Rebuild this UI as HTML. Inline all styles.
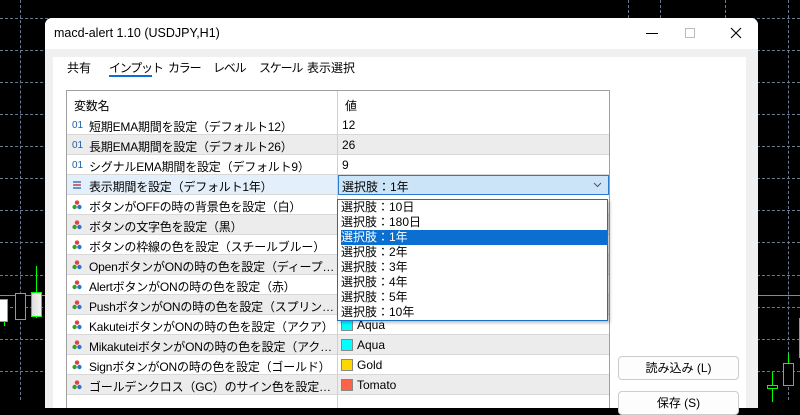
<!DOCTYPE html>
<html><head><meta charset="utf-8"><style>
*{margin:0;padding:0;box-sizing:border-box}
body{width:800px;height:400px;overflow:hidden;background:#000;position:relative;font-family:"Liberation Sans","Noto Sans CJK JP",sans-serif;font-size:12px;color:#000}
.a{position:absolute}
.hd{border-top:1px dashed #6a7a90;height:0;width:800px;left:0}
.vd{border-left:1px dashed #6a7a90;width:0;height:400px;top:0}
.dlg{left:45px;top:18px;width:713px;height:390px;background:#f0f0f0;border-radius:7px 7px 0 0;overflow:hidden}
.title{left:0;top:0;width:713px;height:31px;background:#fff;font-size:12.5px}
.panel{left:8px;top:39px;width:693px;height:360px;background:#fff}
.tab{top:41px;font-size:12px;letter-spacing:-1.2px;white-space:nowrap}
.tbl{left:21px;top:72px;width:544px;height:330px;border:1px solid #a0a0a0;border-bottom:none;background:#fff;overflow:hidden}
.row{position:absolute;left:0;width:542px;height:20px;border-bottom:1px solid #d8d8d8}
.row.g{background:#ececec}
.n{position:absolute;left:22px;top:3px;white-space:nowrap;font-size:12px;letter-spacing:-0.2px;width:246px;overflow:hidden;text-overflow:ellipsis}
.v{position:absolute;left:275px;top:3px;white-space:nowrap}
.ic{position:absolute;left:5px;top:5px;font-size:10px;color:#1a5fa8}
.cl{position:absolute;left:5px;top:5px}
.col{position:absolute;left:270px;top:0;width:1px;height:330px;background:#d0d0d0}
.sw{position:absolute;left:274px;top:4px;width:12px;height:12px;border:1px solid #888}
.tri{position:absolute;left:5px;top:5px;width:10px;height:10px}
.list{left:337px;top:199px;width:271px;height:122px;background:#fff;border:1px solid #1a6fc8;box-shadow:2px 2px 3px rgba(0,0,0,.25)}
.li{position:absolute;left:3px;height:15px;width:266px;font-size:12px;line-height:15px}
.btn{left:618px;width:121px;height:24px;border:1px solid #ccc;border-radius:4px;background:#fdfdfd;text-align:center;line-height:22px;font-size:12px}
</style></head><body>
<svg width="0" height="0" style="position:absolute"><defs><g id="c"><circle cx="5" cy="2.6" r="2.2" fill="#e04040"/><circle cx="2.6" cy="7" r="2.2" fill="#30a030"/><circle cx="7.4" cy="7" r="2.2" fill="#3070d0"/></g></defs></svg>
<div class="a hd" style="top:18px"></div><div class="a hd" style="top:50px"></div><div class="a hd" style="top:82px"></div><div class="a hd" style="top:114px"></div><div class="a hd" style="top:146px"></div><div class="a hd" style="top:178px"></div><div class="a hd" style="top:210px"></div><div class="a hd" style="top:242px"></div><div class="a hd" style="top:275px"></div><div class="a hd" style="top:307px"></div><div class="a hd" style="top:339px"></div><div class="a hd" style="top:371px"></div>
<div class="a" style="left:0;top:295px;width:800px;height:1px;background:#888"></div>
<div class="a vd" style="left:20px"></div><div class="a vd" style="left:628px"></div><div class="a vd" style="left:660px"></div><div class="a vd" style="left:725px"></div><div class="a vd" style="left:788px"></div>
<div class="a" style="left:-2px;top:299px;width:10px;height:23px;background:#fff;border:1px solid #0f0"></div>
<div class="a" style="left:4px;top:322px;width:1px;height:4px;background:#0f0"></div>
<div class="a" style="left:15px;top:293px;width:11px;height:27px;background:#000;border:1px solid #0f0"></div>
<div class="a" style="left:36px;top:266px;width:1px;height:52px;background:#0f0"></div>
<div class="a" style="left:31px;top:292px;width:11px;height:25px;background:linear-gradient(90deg,#ddd,#f4f4f4);border:1px solid #0f0"></div>
<div class="a" style="left:772px;top:372px;width:1px;height:30px;background:#0f0"></div>
<div class="a" style="left:767px;top:385px;width:11px;height:4px;background:#000;border:1px solid #0f0"></div>
<div class="a" style="left:788px;top:353px;width:1px;height:12px;background:#0f0"></div>
<div class="a" style="left:783px;top:363px;width:11px;height:23px;background:#000;border:1px solid #0f0"></div>
<div class="a" style="left:799px;top:318px;width:2px;height:40px;background:#0f0"></div>

<div class="a dlg">
 <div class="a title"><span class="a" style="left:9px;top:8px">macd-alert 1.10 (USDJPY,H1)</span>
  <div class="a" style="left:601px;top:15px;width:12px;height:1px;background:#000"></div>
  <div class="a" style="left:640px;top:10px;width:10px;height:10px;border:1px solid #bbb"></div>
  <svg class="a" style="left:685px;top:9px" width="12" height="12"><path d="M1 1L11 11M11 1L1 11" stroke="#000" stroke-width="1.1"/></svg>
 </div>
 <div class="a panel"></div>
 <span class="a tab" style="left:22px;letter-spacing:0">共有</span>
 <span class="a tab" style="left:64px">インプット</span>
 <div class="a" style="left:64px;top:57px;width:43px;height:2px;background:#0a6fd0"></div>
 <span class="a tab" style="left:123px">カラー</span>
 <span class="a tab" style="left:168px">レベル</span>
 <span class="a tab" style="left:214px">スケール</span>
 <span class="a tab" style="left:262px;letter-spacing:0">表示選択</span>
 <div class="a tbl">
  <div class="row" style="top:0;height:25px;border-bottom:none"><span class="n" style="left:7px;top:6px">変数名</span><span class="v" style="top:6px;left:278px">値</span></div>
  <div class="row" style="top:24px"><span class="ic">01</span><span class="n">短期EMA期間を設定（デフォルト12）</span><span class="v">12</span></div>
  <div class="row g" style="top:44px"><span class="ic">01</span><span class="n">長期EMA期間を設定（デフォルト26）</span><span class="v">26</span></div>
  <div class="row" style="top:64px"><span class="ic">01</span><span class="n">シグナルEMA期間を設定（デフォルト9）</span><span class="v">9</span></div>
  <div class="row" style="top:84px;background:#e3effb"><svg class="tri" viewBox="0 0 10 10"><path d="M1 2h8M2 5h6M1 8h8" stroke="#1a5fa8" stroke-width="1.3"/><path d="M1 5h8" stroke="#d33" stroke-width="1.3"/></svg><span class="n">表示期間を設定（デフォルト1年）</span>
   <div style="position:absolute;left:271px;top:0;width:271px;height:20px;background:#cce4f7;border:1px solid #2a7ad0"><span style="position:absolute;left:3px;top:2px">選択肢：1年</span><svg style="position:absolute;right:6px;top:6px" width="9" height="6"><path d="M1 1l3.5 3.5L8 1" stroke="#555" fill="none"/></svg></div></div>
  <div class="row" style="top:104px"><svg class="cl" width="10" height="10"><use href="#c"/></svg><span class="n">ボタンがOFFの時の背景色を設定（白）</span></div>
  <div class="row g" style="top:124px"><svg class="cl" width="10" height="10"><use href="#c"/></svg><span class="n">ボタンの文字色を設定（黒）</span></div>
  <div class="row" style="top:144px"><svg class="cl" width="10" height="10"><use href="#c"/></svg><span class="n">ボタンの枠線の色を設定（スチールブルー）</span></div>
  <div class="row g" style="top:164px"><svg class="cl" width="10" height="10"><use href="#c"/></svg><span class="n">OpenボタンがONの時の色を設定（ディープスカイブルー）</span></div>
  <div class="row" style="top:184px"><svg class="cl" width="10" height="10"><use href="#c"/></svg><span class="n">AlertボタンがONの時の色を設定（赤）</span></div>
  <div class="row g" style="top:204px"><svg class="cl" width="10" height="10"><use href="#c"/></svg><span class="n">PushボタンがONの時の色を設定（スプリンググリーン）</span></div>
  <div class="row" style="top:224px"><svg class="cl" width="10" height="10"><use href="#c"/></svg><span class="n">KakuteiボタンがONの時の色を設定（アクア）</span><div class="sw" style="background:#0ff"></div><span class="v" style="left:290px">Aqua</span></div>
  <div class="row g" style="top:244px"><svg class="cl" width="10" height="10"><use href="#c"/></svg><span class="n">MikakuteiボタンがONの時の色を設定（アクア）</span><div class="sw" style="background:#0ff"></div><span class="v" style="left:290px">Aqua</span></div>
  <div class="row" style="top:264px"><svg class="cl" width="10" height="10"><use href="#c"/></svg><span class="n">SignボタンがONの時の色を設定（ゴールド）</span><div class="sw" style="background:#ffd700"></div><span class="v" style="left:290px">Gold</span></div>
  <div class="row g" style="top:284px"><svg class="cl" width="10" height="10"><use href="#c"/></svg><span class="n">ゴールデンクロス（GC）のサイン色を設定（トマト）</span><div class="sw" style="background:#ff6347"></div><span class="v" style="left:290px">Tomato</span></div>
  <div class="row" style="top:304px"></div>
  <div class="col"></div>
 </div>
</div>
<div class="a list">
 <div class="li" style="top:0">選択肢：10日</div>
 <div class="li" style="top:15px">選択肢：180日</div>
 <div class="li" style="top:30px;background:#0a6fd0;color:#fff">選択肢：1年</div>
 <div class="li" style="top:45px">選択肢：2年</div>
 <div class="li" style="top:60px">選択肢：3年</div>
 <div class="li" style="top:75px">選択肢：4年</div>
 <div class="li" style="top:90px">選択肢：5年</div>
 <div class="li" style="top:105px">選択肢：10年</div>
</div>
<div class="a btn" style="top:356px">読み込み (L)</div>
<div class="a btn" style="top:391px">保存 (S)</div>
</body></html>
